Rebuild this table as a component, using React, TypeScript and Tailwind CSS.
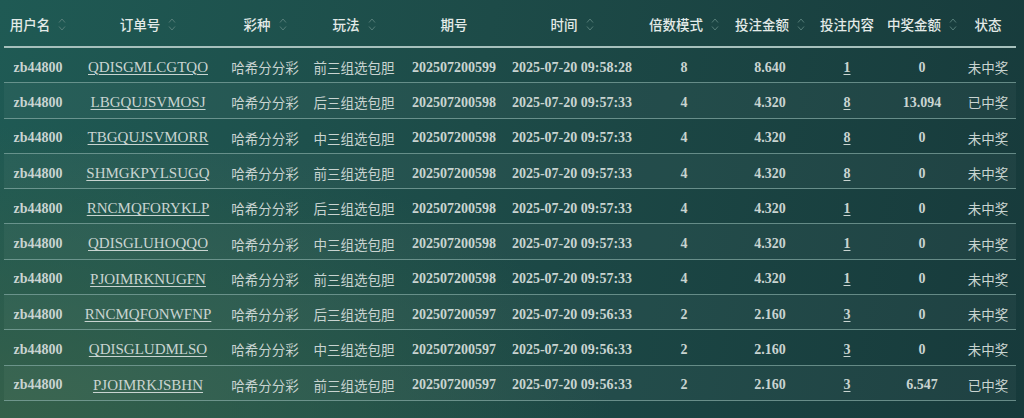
import React from "react";

interface Bet {
  user: string;
  order: string;
  lottery: string;
  play: string;
  issue: string;
  time: string;
  multiple: number;
  amount: string;
  content: number;
  win: string;
  status: string;
}

const rows: Bet[] = [
  { user: "zb44800", order: "QDISGMLCGTQO", lottery: "哈希分分彩", play: "前三组选包胆", issue: "202507200599", time: "2025-07-20 09:58:28", multiple: 8, amount: "8.640", content: 1, win: "0", status: "未中奖" },
  { user: "zb44800", order: "LBGQUJSVMOSJ", lottery: "哈希分分彩", play: "后三组选包胆", issue: "202507200598", time: "2025-07-20 09:57:33", multiple: 4, amount: "4.320", content: 8, win: "13.094", status: "已中奖" },
  { user: "zb44800", order: "TBGQUJSVMORR", lottery: "哈希分分彩", play: "中三组选包胆", issue: "202507200598", time: "2025-07-20 09:57:33", multiple: 4, amount: "4.320", content: 8, win: "0", status: "未中奖" },
  { user: "zb44800", order: "SHMGKPYLSUGQ", lottery: "哈希分分彩", play: "前三组选包胆", issue: "202507200598", time: "2025-07-20 09:57:33", multiple: 4, amount: "4.320", content: 8, win: "0", status: "未中奖" },
  { user: "zb44800", order: "RNCMQFORYKLP", lottery: "哈希分分彩", play: "后三组选包胆", issue: "202507200598", time: "2025-07-20 09:57:33", multiple: 4, amount: "4.320", content: 1, win: "0", status: "未中奖" },
  { user: "zb44800", order: "QDISGLUHOQQO", lottery: "哈希分分彩", play: "中三组选包胆", issue: "202507200598", time: "2025-07-20 09:57:33", multiple: 4, amount: "4.320", content: 1, win: "0", status: "未中奖" },
  { user: "zb44800", order: "PJOIMRKNUGFN", lottery: "哈希分分彩", play: "前三组选包胆", issue: "202507200598", time: "2025-07-20 09:57:33", multiple: 4, amount: "4.320", content: 1, win: "0", status: "未中奖" },
  { user: "zb44800", order: "RNCMQFONWFNP", lottery: "哈希分分彩", play: "后三组选包胆", issue: "202507200597", time: "2025-07-20 09:56:33", multiple: 2, amount: "2.160", content: 3, win: "0", status: "未中奖" },
  { user: "zb44800", order: "QDISGLUDMLSO", lottery: "哈希分分彩", play: "中三组选包胆", issue: "202507200597", time: "2025-07-20 09:56:33", multiple: 2, amount: "2.160", content: 3, win: "0", status: "未中奖" },
  { user: "zb44800", order: "PJOIMRKJSBHN", lottery: "哈希分分彩", play: "前三组选包胆", issue: "202507200597", time: "2025-07-20 09:56:33", multiple: 2, amount: "2.160", content: 3, win: "6.547", status: "已中奖" },
];

const headers: { label: string; sort: boolean }[] = [
  { label: "用户名", sort: true },
  { label: "订单号", sort: true },
  { label: "彩种", sort: true },
  { label: "玩法", sort: true },
  { label: "期号", sort: false },
  { label: "时间", sort: true },
  { label: "倍数模式", sort: true },
  { label: "投注金额", sort: true },
  { label: "投注内容", sort: false },
  { label: "中奖金额", sort: true },
  { label: "状态", sort: false },
];

const cols = "grid grid-cols-[68px_152px_82px_96px_104px_132px_92px_80px_74px_76px_56px]";
const sans = "font-['Noto_Sans_CJK_SC','Noto_Sans',sans-serif]";
const serif = "font-['Liberation_Serif','Noto_Sans_CJK_SC',serif]";

const SortIcon = () => (
  <svg width="8" height="15" viewBox="0 0 8 15" fill="none" className="ml-[8px] shrink-0">
    <path d="M1 5.5 L4 2 L7 5.5" stroke="#557d78" strokeWidth="1" />
    <path d="M1 9.5 L4 13 L7 9.5" stroke="#557d78" strokeWidth="1" />
  </svg>
);

const App: React.FC = () => {
  return (
    <div className="h-screen w-full overflow-hidden bg-[radial-gradient(ellipse_60%_70%_at_0%_100%,#35604a_0%,transparent_100%),linear-gradient(100deg,#1f5a54_0%,#1d4b48_45%,#173a3b_100%)]">
      <div className="pl-[4px] w-[1016px]">
        <div className={`${cols} h-[48px] border-b-2 border-[#a6c0bc] ${sans} text-[13.5px] font-medium text-[#e3eae8]`}>
          {headers.map((h) => (
            <div key={h.label} className="flex items-center justify-center pt-[2px]">
              <span>{h.label}</span>
              {h.sort && <SortIcon />}
            </div>
          ))}
        </div>
        {rows.map((r, i) => (
          <div
            key={r.order}
            className={`${cols} h-[35.3px] pt-[4px] border-b border-[#86aba5]/70 items-center text-center text-[#c9d4d1] ${
              i % 2 === 1 ? "bg-white/[0.035]" : ""
            }`}
          >
            <div className={`${serif} font-bold text-[14px]`}>{r.user}</div>
            <div className={`${serif} text-[15px] underline underline-offset-2`}>{r.order}</div>
            <div className={`${sans} text-[13.5px]`}>{r.lottery}</div>
            <div className={`${sans} text-[13.5px]`}>{r.play}</div>
            <div className={`${serif} font-bold text-[14px]`}>{r.issue}</div>
            <div className={`${serif} font-bold text-[14px]`}>{r.time}</div>
            <div className={`${serif} font-bold text-[14px]`}>{r.multiple}</div>
            <div className={`${serif} font-bold text-[14px]`}>{r.amount}</div>
            <div className={`${serif} font-bold text-[14px] underline underline-offset-2`}>{r.content}</div>
            <div className={`${serif} font-bold text-[14px]`}>{r.win}</div>
            <div className={`${sans} text-[13.5px]`}>{r.status}</div>
          </div>
        ))}
      </div>
    </div>
  );
};

export default App;
